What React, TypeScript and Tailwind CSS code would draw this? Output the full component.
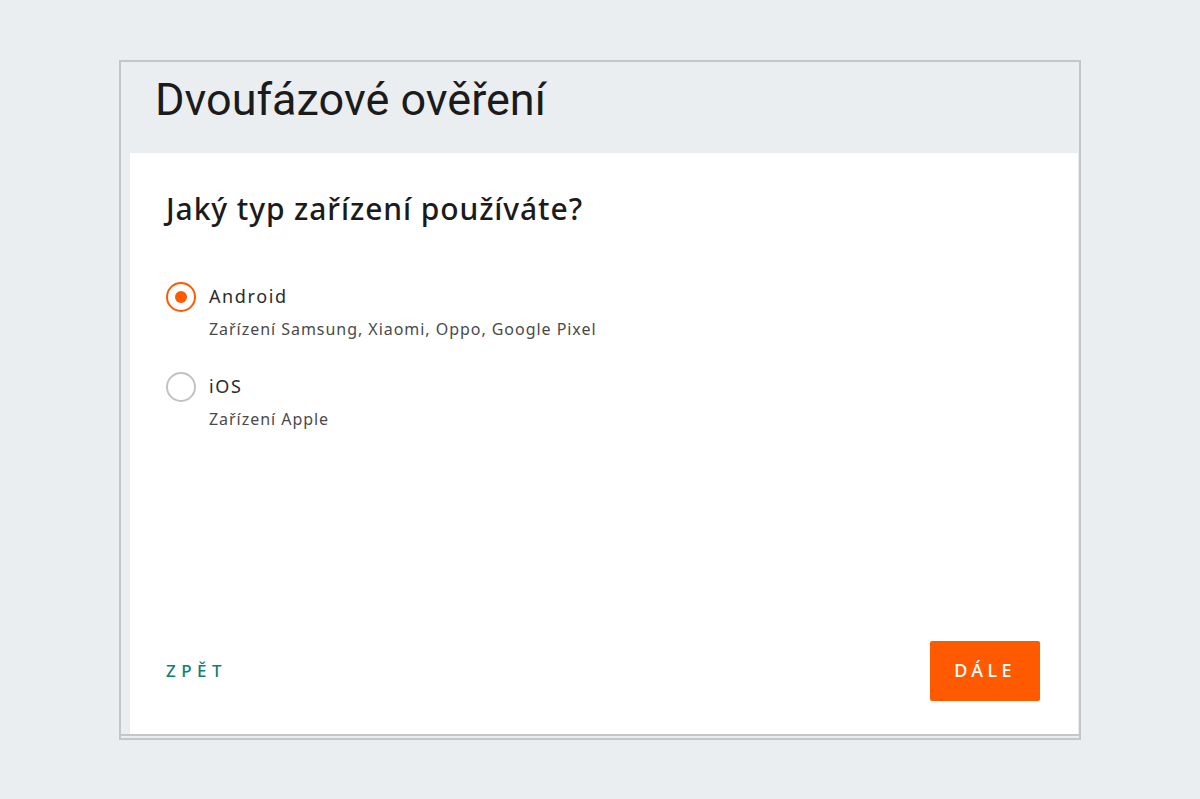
import React, { useState } from 'react';

const options = [
  { id: 'android', label: 'Android', hint: 'Zařízení Samsung, Xiaomi, Oppo, Google Pixel' },
  { id: 'ios', label: 'iOS', hint: 'Zařízení Apple' },
];

export default function App() {
  const [device, setDevice] = useState('android');

  return (
    <div className="min-h-screen w-full bg-[#ebeef1] flex items-center justify-center font-['Noto_Sans',Roboto,sans-serif]">
      <div className="w-[962px] h-[680px] border-2 border-[#c6c6c6] flex flex-col pb-[2px]">
        {/* Header */}
        <div className="h-[91px] shrink-0 pl-[34px] pt-[12px]">
          <h1 className="font-['Roboto',sans-serif] text-[45px] leading-[52px] font-normal text-[#1b1b1b]">Dvoufázové ověření</h1>
        </div>

        {/* Panel */}
        <div className="flex-1 border-b-2 border-[#c6c6c6]">
          <div className="h-full ml-[9px] mr-[1px] bg-white flex flex-col pl-[36px] pr-[38px] pt-[36px] pb-[33px]">
            <h2 className="text-[30px] leading-[40px] font-medium tracking-[0.03em] text-[#1b1b1b]">Jaký typ zařízení používáte?</h2>

            <div className="mt-[52px] flex flex-col gap-[31px]">
              {options.map((o) => {
                const active = device === o.id;
                return (
                  <button key={o.id} onClick={() => setDevice(o.id)} className="flex items-start gap-[13px] text-left">
                    <span
                      className={
                        'mt-[1px] w-[30px] h-[30px] rounded-full flex items-center justify-center shrink-0 ' +
                        (active ? 'border-2 border-[#ff5a00]' : 'border-2 border-[#c2c2c2]')
                      }
                    >
                      {active && <span className="w-[12px] h-[12px] rounded-full bg-[#ff5a00]" />}
                    </span>
                    <span className="flex flex-col">
                      <span className="text-[18px] leading-[30px] tracking-[0.09em] text-[#2b2b2b]">{o.label}</span>
                      <span className="mt-[7px] text-[16px] leading-[22px] tracking-[0.06em] text-[#4a4a4a]">{o.hint}</span>
                    </span>
                  </button>
                );
              })}
            </div>

            <div className="mt-auto flex items-center justify-between">
              <button className="text-[17px] font-medium tracking-[0.32em] text-[#0d7f74]">ZPĚT</button>
              <button className="w-[110px] h-[60px] rounded-[2px] bg-[#ff5a00] text-white text-[18px] font-medium tracking-[0.24em]">DÁLE</button>
            </div>
          </div>
        </div>
      </div>
    </div>
  );
}
